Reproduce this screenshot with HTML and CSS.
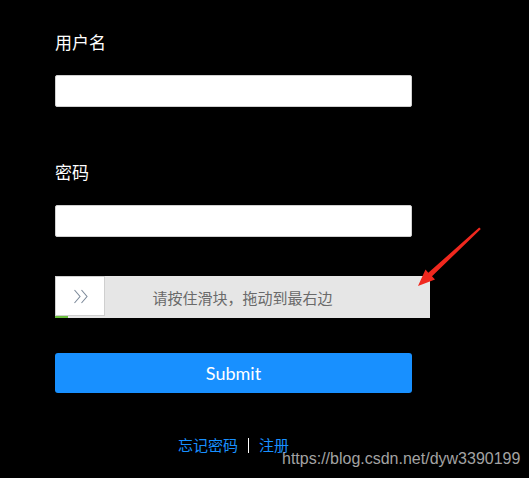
FILE: index.html
```html
<!DOCTYPE html>
<html lang="zh-CN">
<head>
<meta charset="utf-8">
<title>登录</title>
<link rel="stylesheet" href="styles.css">
</head>
<body>
<form class="login">
  <label class="label" for="user">用户名</label>
  <input class="field" id="user" type="text">
  <label class="label label-pwd" for="pwd">密码</label>
  <input class="field" id="pwd" type="password">
  <div class="slider">
    <div class="handle">
      <svg width="15" height="15" viewBox="0 0 15 15"><path d="M1.5 1 L7 7.5 L1.5 14 M8.5 1 L14 7.5 L8.5 14" fill="none" stroke="#7d8a9a" stroke-width="1.1"/></svg>
    </div>
    <span class="progress"></span>
    <span class="slider-text">请按住滑块，拖动到最右边</span>
  </div>
  <button class="submit" type="button">Submit</button>
  <div class="links">
    <a class="link" href="#">忘记密码</a>
    <span class="sep"></span>
    <a class="link" href="#">注册</a>
  </div>
</form>
<svg class="arrow" width="529" height="478" viewBox="0 0 529 478">
  <polygon points="418,286 435,279.5 432,276.3 480.8,229 479.2,227.6 428.3,272.8 425.5,269.5" fill="#f0281e"/>
</svg>
<div class="watermark">https://blog.csdn.net/dyw3390199</div>
</body>
</html>
```
FILE: styles.css
```css
html, body {
  margin: 0;
  padding: 0;
  background: #000;
  width: 529px;
  height: 478px;
  overflow: hidden;
}
body {
  position: relative;
  font-family: "Noto Sans CJK SC", "Noto Sans", sans-serif;
}
.login {
  display: flex;
  flex-direction: column;
  align-items: flex-start;
  padding: 30px 0 0 55px;
  width: 357px;
}
.label {
  color: #fff;
  font-size: 17px;
  line-height: 24px;
  height: 24px;
}
.label-pwd {
  margin-top: 53px;
}
.field {
  box-sizing: border-box;
  width: 357px;
  height: 32px;
  margin: 21px 0 0 0;
  border: 1px solid #d0d0d0;
  border-radius: 2px;
  background: #fff;
  outline: none;
  padding: 0 8px;
}
.slider {
  position: relative;
  box-sizing: border-box;
  width: 375px;
  height: 42px;
  margin-top: 39px;
  background: #e6e6e6;
  display: flex;
  align-items: center;
  justify-content: center;
}
.handle {
  position: absolute;
  left: 0;
  top: 0;
  box-sizing: border-box;
  width: 50px;
  height: 40px;
  background: #fff;
  border: 1px solid #cfcfcf;
  display: flex;
  align-items: center;
  justify-content: center;
}
.handle svg {
  display: block;
  margin-left: 1px;
}
.progress {
  position: absolute;
  left: 0;
  bottom: 0;
  width: 13px;
  height: 2px;
  background: #6cbf3f;
}
.slider-text {
  color: #6a6a6a;
  font-size: 15px;
  line-height: 20px;
  margin-top: 2px;
}
.submit {
  box-sizing: border-box;
  width: 357px;
  height: 40px;
  margin-top: 35px;
  border: none;
  border-radius: 3px;
  background: #1890ff;
  color: #fff;
  font-family: Lato, "Noto Sans", sans-serif;
  font-size: 18px;
  padding: 0;
}
.links {
  width: 357px;
  margin-top: 42px;
  display: flex;
  justify-content: center;
  align-items: center;
  height: 20px;
}
.link {
  color: #1890ff;
  text-decoration: none;
  font-size: 15px;
  line-height: 20px;
}
.sep {
  width: 1px;
  height: 15px;
  background: #fff;
  margin: 0 10px;
}
.arrow {
  position: absolute;
  left: 0;
  top: 0;
  pointer-events: none;
}
.watermark {
  position: absolute;
  left: 282px;
  top: 449px;
  font-family: "Liberation Sans", Arial, sans-serif;
  font-size: 16px;
  line-height: 20px;
  color: #a3a3a3;
}
```
